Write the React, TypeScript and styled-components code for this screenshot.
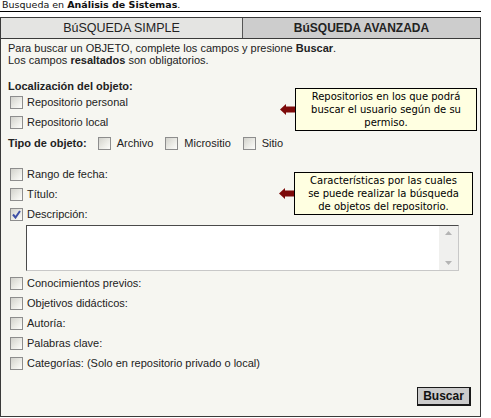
import React from 'react';
import styled, { createGlobalStyle } from 'styled-components';

const GlobalStyle = createGlobalStyle`
  body {
    margin: 0;
    background: #fff;
    color: #111;
  }
`;

const Page = styled.div`
  width: 481px;
`;

const Breadcrumb = styled.div`
  width: 479px;
  height: 11px;
  padding-left: 2px;
  border-bottom: 1px solid #000;
  font: 9.5px/10px 'DejaVu Sans', Verdana, sans-serif;
  color: #111;
  overflow: hidden;
  white-space: nowrap;
`;

const Panel = styled.div`
  margin-top: 5px;
  width: 479px;
  border: 1px solid #3a3a3a;
  background: #f6f6f1;
  font: 11px 'Liberation Sans', Arial, sans-serif;
  color: #222;
`;

const Tabs = styled.div`
  display: grid;
  grid-template-columns: 241px 1fr;
  height: 20px;
  border-bottom: 1px solid #3a3a3a;
`;

const Tab = styled.div<{ $active?: boolean }>`
  display: flex;
  align-items: center;
  justify-content: center;
  background: ${p => (p.$active ? '#cdcdcd' : '#e4e4e2')};
  font: ${p => (p.$active ? 'bold 12px' : '12.5px')} 'Liberation Sans', Arial, sans-serif;
  color: #222;
  & + & {
    border-left: 1px solid #555;
  }
`;

const Body = styled.div`
  padding: 3px 0 10px 7px;
`;

const Intro = styled.p`
  margin: 0;
  line-height: 12px;
`;

const Section = styled.div<{ $gap: number }>`
  display: flex;
  align-items: flex-start;
  margin-top: ${p => p.$gap}px;
`;

const Fields = styled.div`
  display: flex;
  flex-direction: column;
`;

const GroupTitle = styled.div`
  font-weight: bold;
  line-height: 12px;
`;

const Row = styled.label<{ $gap?: number }>`
  display: flex;
  align-items: center;
  gap: 4px;
  height: 20px;
  padding-left: 2px;
  margin-top: ${p => p.$gap ?? 0}px;
`;

const TypeRow = styled.div`
  display: flex;
  align-items: center;
  height: 20px;
  margin-top: 1px;
`;

const TypeLabel = styled.span`
  font-weight: bold;
  margin-right: 11px;
`;

const TypeOption = styled.label`
  display: flex;
  align-items: center;
  gap: 6px;
  margin-right: 12px;
`;

const Box = styled.span`
  flex: none;
  display: inline-flex;
  align-items: center;
  justify-content: center;
  width: 13px;
  height: 13px;
  box-sizing: border-box;
  border: 1px solid #8d8d8d;
  background: linear-gradient(135deg, #d2d2cc 0%, #ebebe6 55%, #fdfdfb 100%);
`;

const Callout = styled.div<{ $top: number; $right: number }>`
  display: flex;
  align-items: center;
  margin: ${p => p.$top}px ${p => p.$right}px 0 auto;
`;

const Bubble = styled.div<{ $width: number }>`
  width: ${p => p.$width}px;
  box-sizing: border-box;
  border: 1px solid #000;
  background: #ffffe1;
  padding: 1px 0 1px;
  font: 10px/13px 'DejaVu Sans', Verdana, sans-serif;
  color: #000;
  text-align: center;
`;

const TextBox = styled.div`
  display: flex;
  margin: 1px 0 0 18px;
  width: 433px;
  height: 46px;
  box-sizing: border-box;
  border-style: solid;
  border-width: 1px;
  border-color: #4a4a4a #c8c8c8 #c8c8c8 #4a4a4a;
  background: #fff;
`;

const Area = styled.textarea`
  flex: 1;
  border: none;
  outline: none;
  resize: none;
  background: transparent;
  font: 11px 'Liberation Sans', Arial, sans-serif;
`;

const ScrollTrack = styled.div`
  width: 19px;
  display: flex;
  flex-direction: column;
  justify-content: space-between;
  align-items: center;
  padding: 5px 0;
  background: #f0f0ee;
`;

const Footer = styled.div`
  display: flex;
  justify-content: flex-end;
  margin-top: 14px;
  padding-right: 9px;
`;

const Button = styled.button`
  height: 19px;
  width: 54px;
  padding: 0;
  border: 1px solid #1a1a1a;
  border-right-width: 2px;
  border-bottom-width: 2px;
  background: #cbcbcb;
  font: bold 12px 'Liberation Sans', Arial, sans-serif;
  color: #111;
`;

function Check({ checked }: { checked?: boolean }) {
  return (
    <Box>
      {checked && (
        <svg width="9" height="9" viewBox="0 0 9 9">
          <path d="M1 4.5 L3.5 7.5 L8 1" fill="none" stroke="#3d4fa6" strokeWidth="2" />
        </svg>
      )}
    </Box>
  );
}

function Arrow() {
  return (
    <svg width="15" height="11" viewBox="0 0 15 11">
      <path d="M0 5.5 L6 0 L6 2.5 L15 2.5 L15 8.5 L6 8.5 L6 11 Z" fill="#7d0a0a" />
    </svg>
  );
}

function Tri({ up }: { up?: boolean }) {
  return (
    <svg width="7" height="4" viewBox="0 0 7 4">
      <path d={up ? 'M0 4 L3.5 0 L7 4 Z' : 'M0 0 L3.5 4 L7 0 Z'} fill="#b4b4b4" />
    </svg>
  );
}

const extras = [
  'Conocimientos previos:',
  'Objetivos didácticos:',
  'Autoría:',
  'Palabras clave:',
  'Categorías: (Solo en repositorio privado o local)',
];

export default function App() {
  return (
    <Page>
      <GlobalStyle />
      <Breadcrumb>
        Busqueda en <b>Análisis de Sistemas</b>.
      </Breadcrumb>
      <Panel>
        <Tabs>
          <Tab>BúSQUEDA SIMPLE</Tab>
          <Tab $active>BúSQUEDA AVANZADA</Tab>
        </Tabs>
        <Body>
          <Intro>
            Para buscar un OBJETO, complete los campos y presione <b>Buscar</b>.
          </Intro>
          <Intro>
            Los campos <b>resaltados</b> son obligatorios.
          </Intro>

          <Section $gap={14}>
            <Fields>
              <GroupTitle>Localización del objeto:</GroupTitle>
              <Row>
                <Check /> Repositorio personal
              </Row>
              <Row>
                <Check /> Repositorio local
              </Row>
            </Fields>
            <Callout $top={8} $right={3}>
              <Arrow />
              <Bubble $width={182}>
                Repositorios en los que podrá
                <br />
                buscar el usuario según de su
                <br />
                permiso.
              </Bubble>
            </Callout>
          </Section>

          <TypeRow>
            <TypeLabel>Tipo de objeto:</TypeLabel>
            <TypeOption>
              <Check /> Archivo
            </TypeOption>
            <TypeOption>
              <Check /> Micrositio
            </TypeOption>
            <TypeOption>
              <Check /> Sitio
            </TypeOption>
          </TypeRow>

          <Section $gap={11}>
            <Fields>
              <Row>
                <Check /> Rango de fecha:
              </Row>
              <Row>
                <Check /> Título:
              </Row>
              <Row>
                <Check checked /> Descripción:
              </Row>
            </Fields>
            <Callout $top={8} $right={7}>
              <Arrow />
              <Bubble $width={179}>
                Características por las cuales
                <br />
                se puede realizar la búsqueda
                <br />
                de objetos del repositorio.
              </Bubble>
            </Callout>
          </Section>

          <TextBox>
            <Area />
            <ScrollTrack>
              <Tri up />
              <Tri />
            </ScrollTrack>
          </TextBox>

          {extras.map((label, i) => (
            <Row key={label} $gap={i === 0 ? 2 : 0}>
              <Check /> {label}
            </Row>
          ))}

          <Footer>
            <Button>Buscar</Button>
          </Footer>
        </Body>
      </Panel>
    </Page>
  );
}
